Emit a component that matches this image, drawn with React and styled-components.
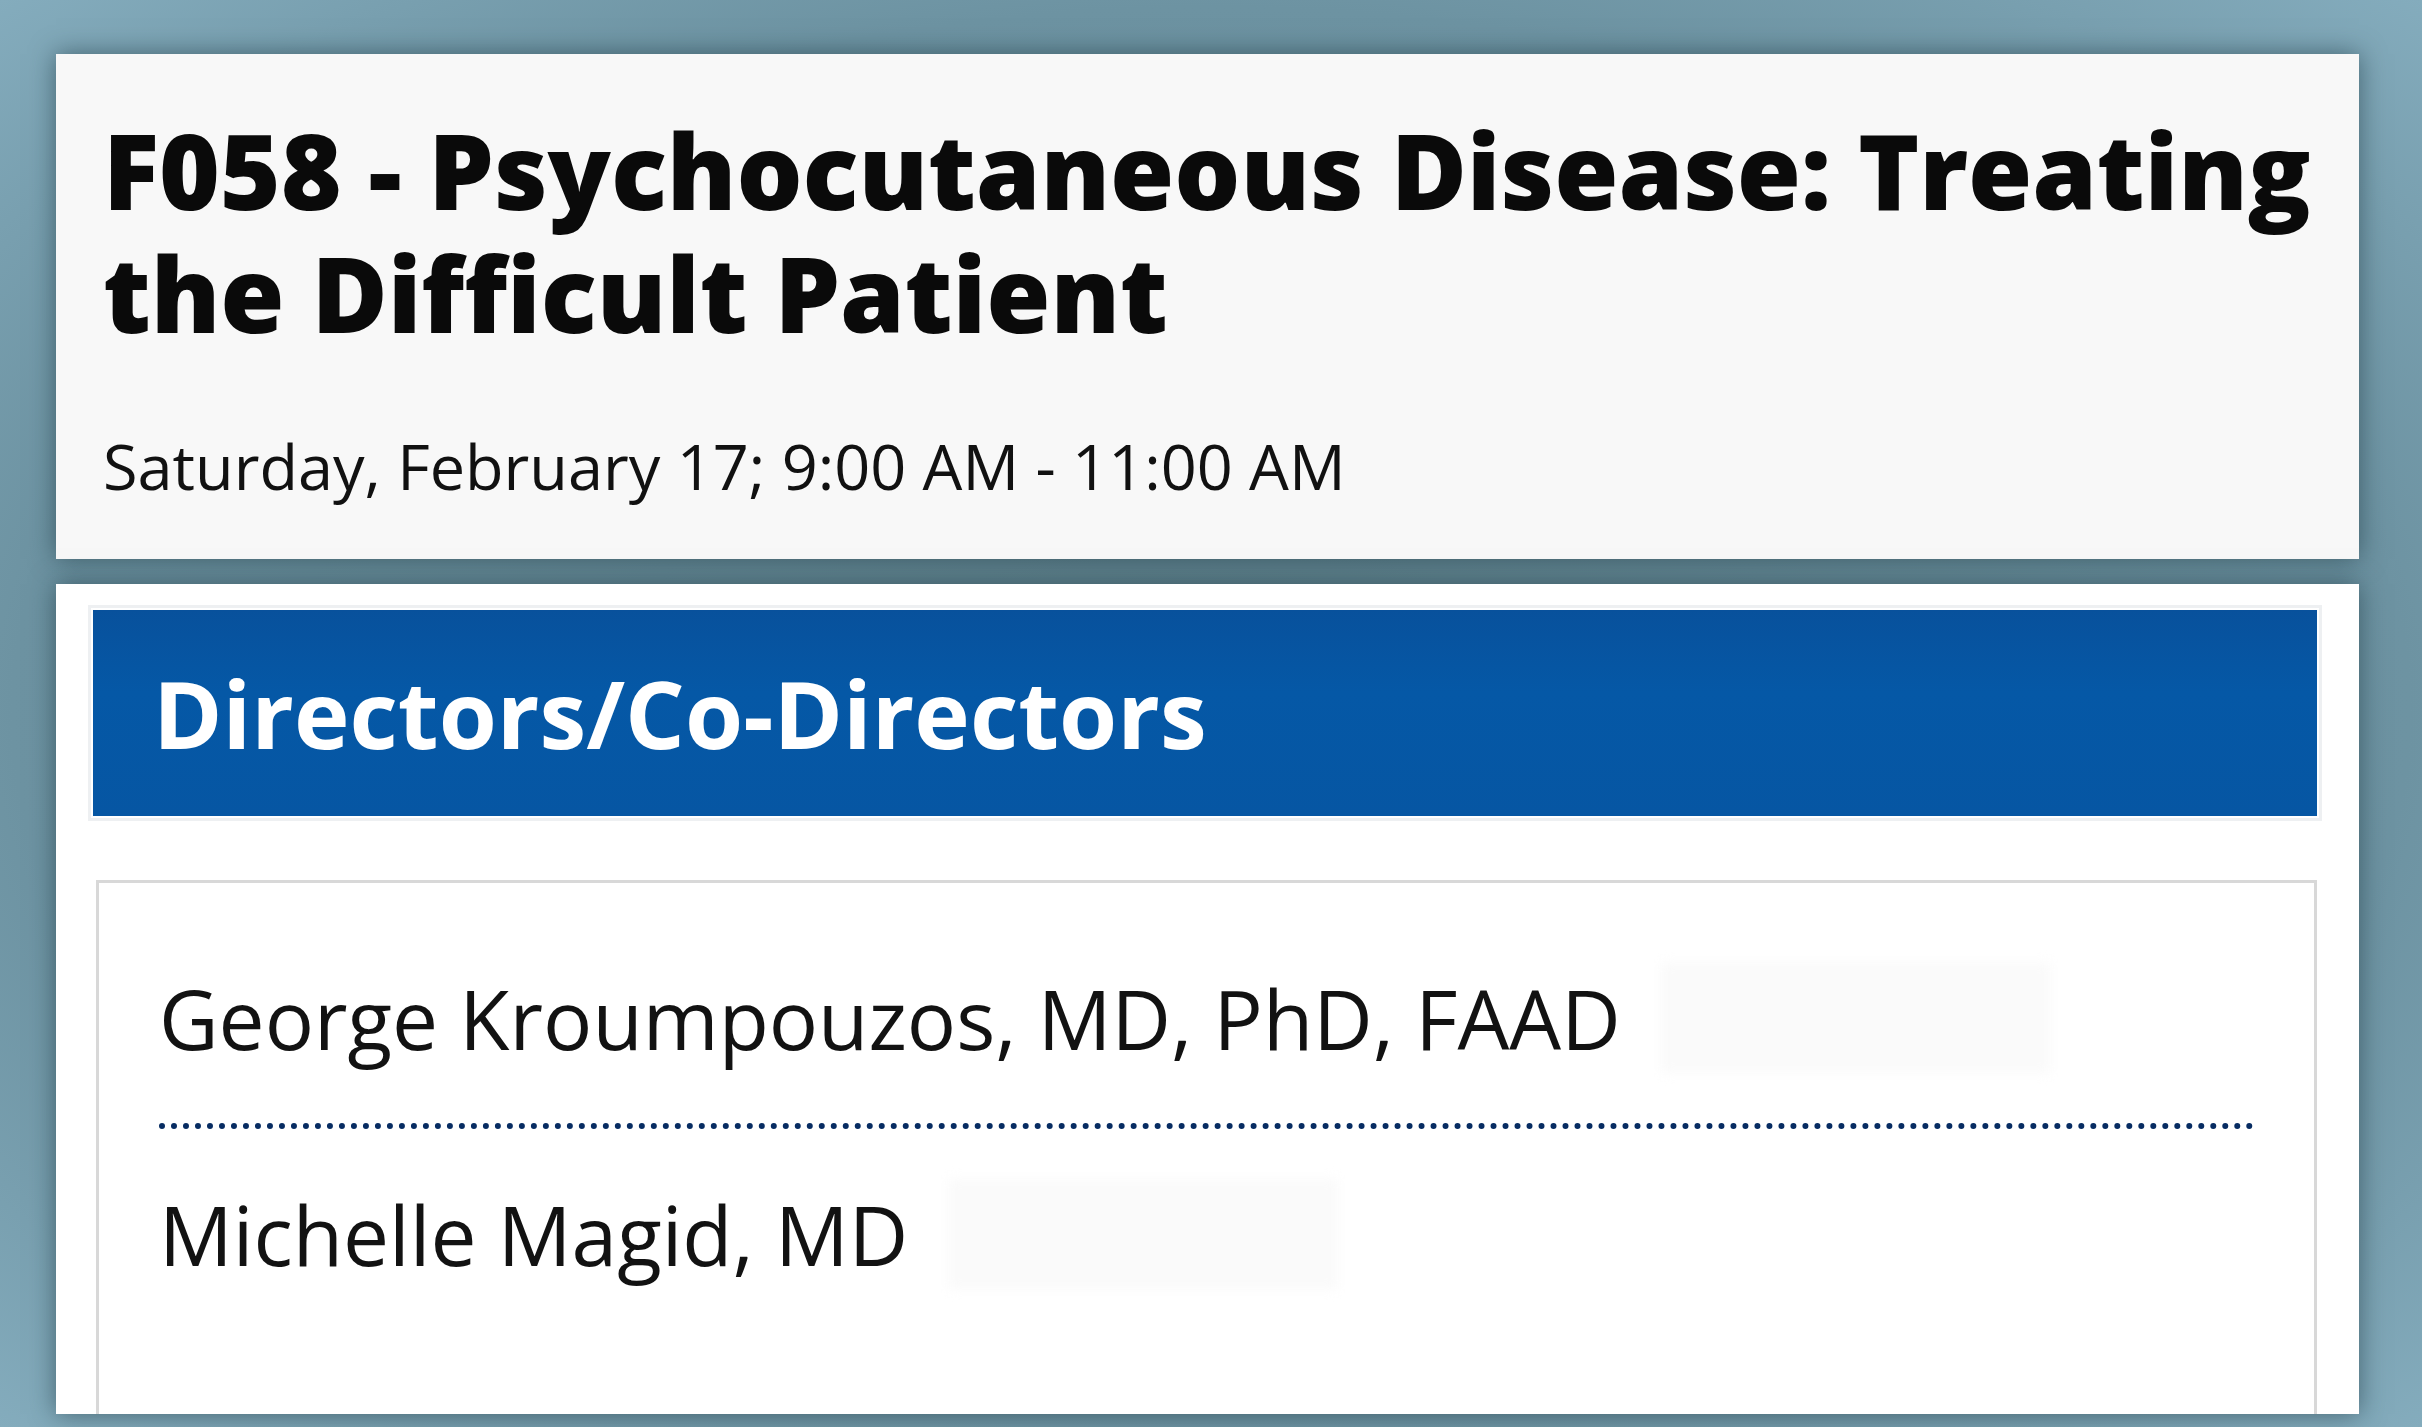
import React from 'react';
import styled, { createGlobalStyle } from 'styled-components';

const GlobalStyle = createGlobalStyle`
  html, body {
    margin: 0;
    padding: 0;
    background: #80a9ba;
  }
  body {
    font-family: "Open Sans", "Noto Sans", sans-serif;
  }
`;

const Page = styled.div`
  width: 2422px;
  height: 1427px;
  box-sizing: border-box;
  padding: 54px 63px 13px 56px;
  display: flex;
  flex-direction: column;
  gap: 25px;
  overflow: hidden;
  background: radial-gradient(ellipse at center, #5f818c 0%, #6d93a2 70%, #84acbd 100%);
`;

const SessionCard = styled.section`
  height: 505px;
  box-sizing: border-box;
  background: #f8f8f8;
  padding: 54px 10px 0 47px;
  box-shadow: 0 0 24px rgba(20, 45, 55, 0.55);
`;

const SessionTitle = styled.h1`
  margin: 0;
  font-size: 104px;
  line-height: 123px;
  font-weight: 800;
  color: #0a0a0a;
  letter-spacing: -0.1px;
`;

const SessionTime = styled.p`
  margin: 72px 0 0;
  font-size: 63px;
  line-height: 80px;
  font-weight: 400;
  color: #111111;
`;

const DirectorsCard = styled.section`
  flex: 1;
  min-height: 0;
  box-sizing: border-box;
  background: #ffffff;
  padding: 26px 42px 0 37px;
  display: flex;
  flex-direction: column;
  overflow: hidden;
  box-shadow: 0 0 24px rgba(20, 45, 55, 0.55);
`;

const SectionHeader = styled.h2`
  margin: 0;
  height: 206px;
  box-sizing: border-box;
  display: flex;
  align-items: center;
  padding: 0 0 0 60px;
  background: linear-gradient(#08519c, #0558a6 40%, #0656a3);
  outline: 3px solid #eef0f2;
  outline-offset: 2px;
  color: #ffffff;
  font-size: 94px;
  font-weight: 700;
  letter-spacing: 0;
`;

const DirectorList = styled.ul`
  list-style: none;
  margin: 64px 0 0 3px;
  padding: 70px 0 0 60px;
  flex: 1;
  border: 3px solid #d8d8d8;
  border-bottom: none;
  background: #ffffff;
`;

const DirectorItem = styled.li`
  display: flex;
  align-items: center;
  gap: 40px;
  margin-right: 60px;
  height: 130px;
  font-size: 82px;
  color: #121212;
  border-bottom: ${(p) => (p.$last ? 'none' : '6px dotted #072c62')};
  padding-bottom: ${(p) => (p.$last ? '0' : '40px')};
  margin-bottom: ${(p) => (p.$last ? '0' : '40px')};
`;

const Redacted = styled.span`
  display: inline-block;
  width: ${(p) => p.$w}px;
  height: 110px;
  background: #fafafa;
  filter: blur(6px);
`;

const directors = [
  { name: 'George Kroumpouzos, MD, PhD, FAAD', blur: 390 },
  { name: 'Michelle Magid, MD', blur: 390 },
];

export default function App() {
  return (
    <>
      <GlobalStyle />
      <Page>
        <SessionCard>
          <SessionTitle>
            F058 - Psychocutaneous Disease: Treating the Difficult Patient
          </SessionTitle>
          <SessionTime>Saturday, February 17; 9:00 AM - 11:00 AM</SessionTime>
        </SessionCard>
        <DirectorsCard>
          <SectionHeader>Directors/Co-Directors</SectionHeader>
          <DirectorList>
            {directors.map((d, i) => (
              <DirectorItem key={d.name} $last={i === directors.length - 1}>
                <span>{d.name}</span>
                <Redacted $w={d.blur} />
              </DirectorItem>
            ))}
          </DirectorList>
        </DirectorsCard>
      </Page>
    </>
  );
}
